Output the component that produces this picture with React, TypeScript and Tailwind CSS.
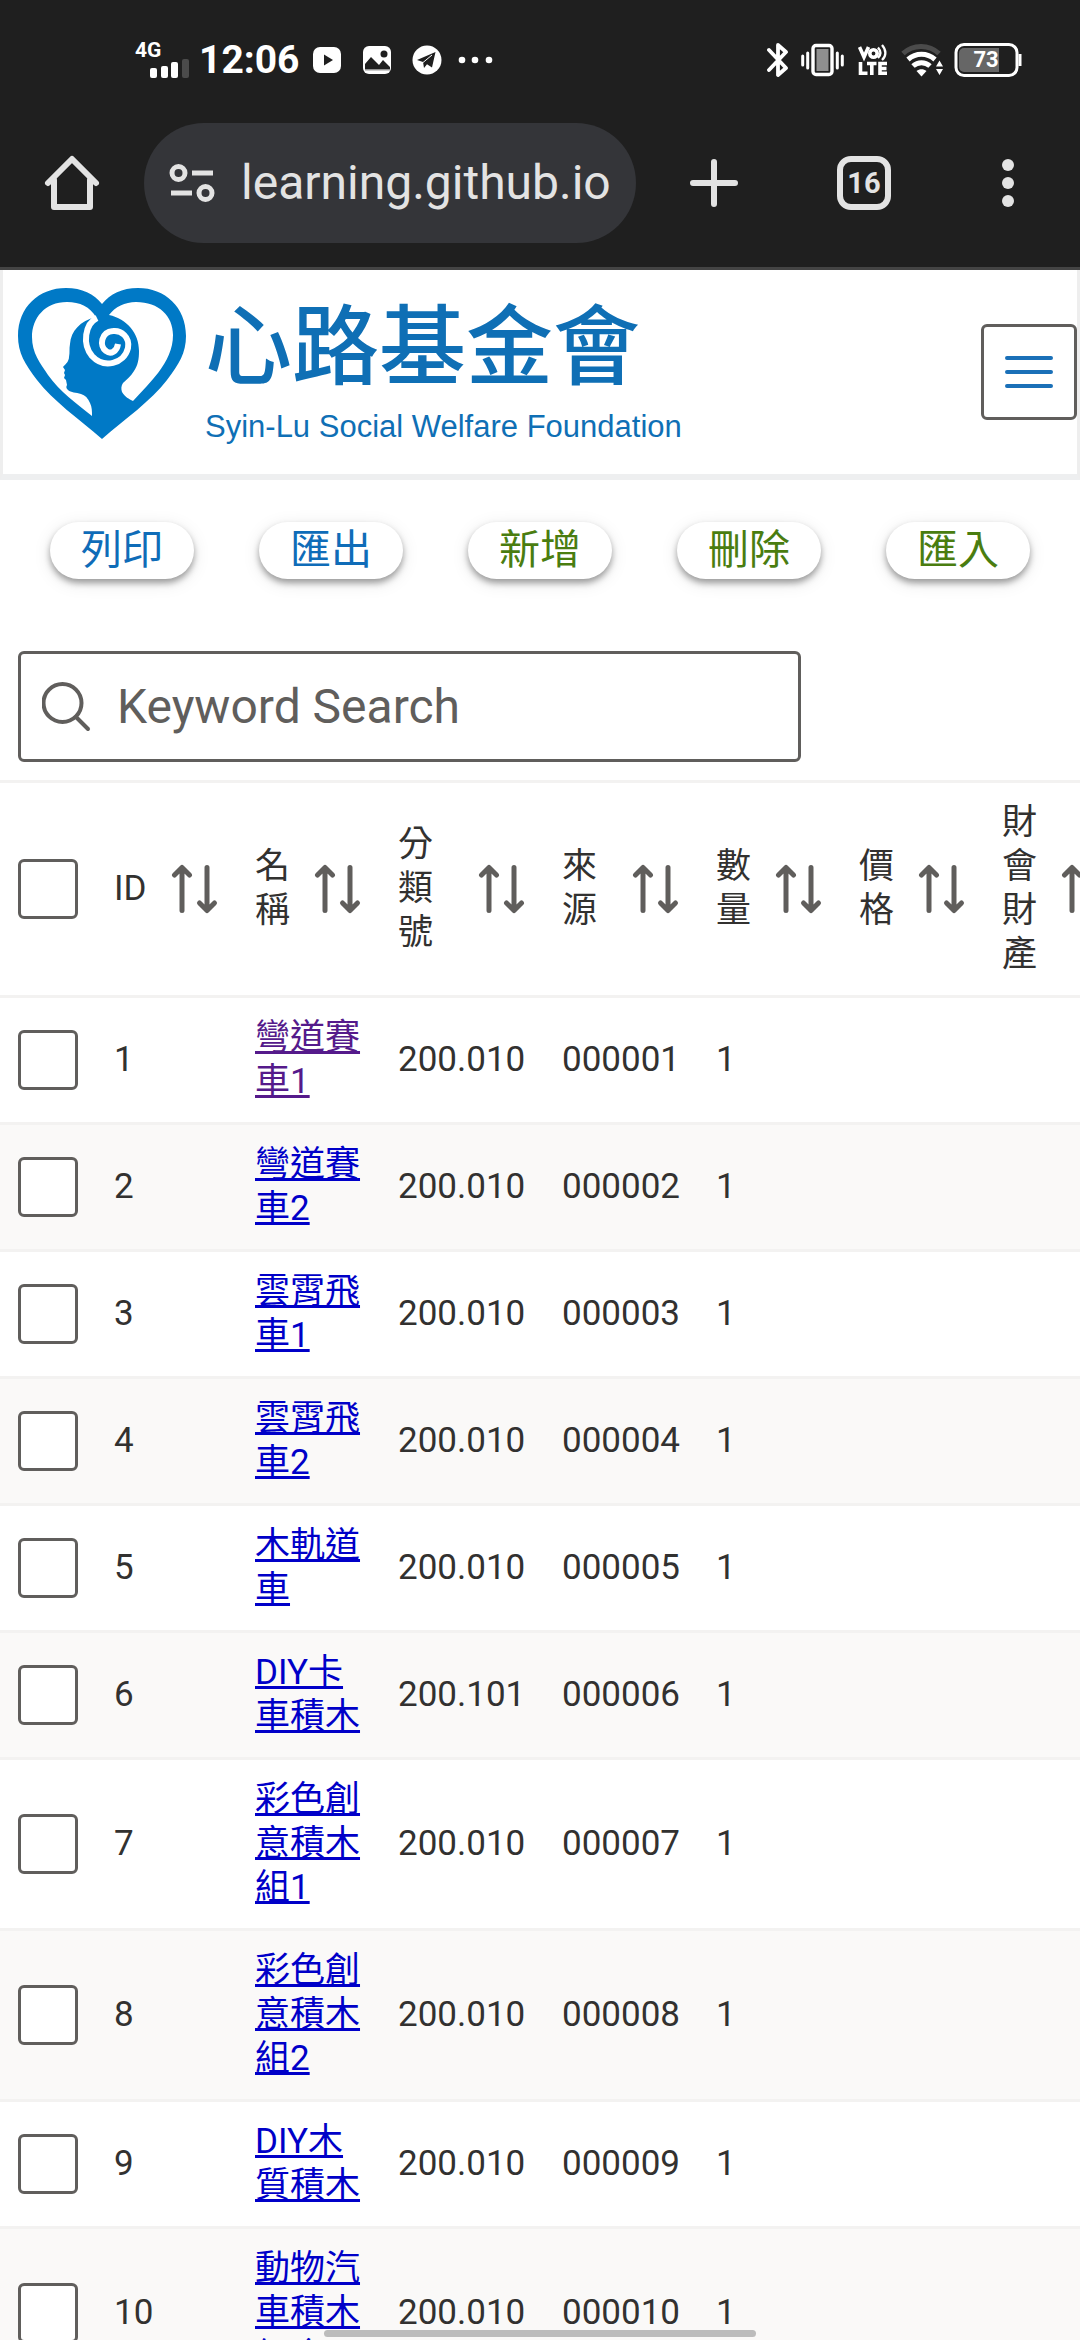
import React from "react";

const cjk = "font-[Roboto,'Noto_Sans_CJK_TC',sans-serif]";

type Item = { id: number; name: string; code: string; source: string; visited?: boolean };

const items: Item[] = [
  { id: 1, name: "彎道賽車1", code: "200.010", source: "000001", visited: true },
  { id: 2, name: "彎道賽車2", code: "200.010", source: "000002" },
  { id: 3, name: "雲霄飛車1", code: "200.010", source: "000003" },
  { id: 4, name: "雲霄飛車2", code: "200.010", source: "000004" },
  { id: 5, name: "木軌道車", code: "200.010", source: "000005" },
  { id: 6, name: "DIY卡車積木", code: "200.101", source: "000006" },
  { id: 7, name: "彩色創意積木組1", code: "200.010", source: "000007" },
  { id: 8, name: "彩色創意積木組2", code: "200.010", source: "000008" },
  { id: 9, name: "DIY木質積木", code: "200.010", source: "000009" },
  { id: 10, name: "動物汽車積木組合", code: "200.010", source: "000010" },
];

const headers = ["ID", "名稱", "分類號", "來源", "數量", "價格", "財會財產"];

const actions = [
  { label: "列印", color: "text-[#0f6cb8]" },
  { label: "匯出", color: "text-[#0f6cb8]" },
  { label: "新增", color: "text-[#4a7d10]" },
  { label: "刪除", color: "text-[#4a7d10]" },
  { label: "匯入", color: "text-[#4a7d10]" },
];

function StatusBar() {
  return (
    <div className="flex h-[120px] items-center justify-between pr-[58px] pl-[135px] text-white">
      <div className="flex items-center">
        <div className="flex w-[56px] flex-col">
          <span className="text-[21px] leading-[18px] font-bold">4G</span>
          <svg width="56" height="20" viewBox="0 0 56 20" aria-hidden="true">
            <g fill="#fff">
              <rect x="15" y="9" width="7" height="10" rx="2" />
              <rect x="26" y="7" width="7" height="12" rx="2" />
              <rect x="36" y="3" width="7" height="16" rx="2" />
            </g>
            <rect x="47" y="0" width="7" height="19" rx="2" fill="#4b4b4b" />
          </svg>
        </div>
        <span className="ml-[8px] w-[98px] text-[39px] leading-[44px] font-bold">12:06</span>
        <svg className="ml-[15px]" width="30" height="30" viewBox="0 0 30 30" aria-hidden="true">
          <rect x="1" y="2" width="28" height="26" rx="7" fill="#fff" />
          <path d="M12 9.500v11l9-5.500z" fill="#1f1f1f" />
        </svg>
        <svg className="ml-[20px]" width="30" height="30" viewBox="0 0 30 30" aria-hidden="true">
          <rect x="1" y="1" width="28" height="28" rx="6" fill="#fff" />
          <circle cx="22" cy="9" r="3.500" fill="#1f1f1f" />
          <path d="M3 19 9 12l8 8 4-5 7 7v3H3z" fill="#1f1f1f" />
          <path d="M3 25h25" stroke="#bbb" strokeWidth="1.500" />
        </svg>
        <svg className="ml-[20px]" width="30" height="30" viewBox="0 0 30 30" aria-hidden="true">
          <circle cx="15" cy="15" r="14.500" fill="#fff" />
          <path d="M5 15 23.500 7 20 22.500l-5-3.200-3 3.700-1-6z" fill="#1f1f1f" />
          <path d="m11 17.500 9-7.500" stroke="#fff" strokeWidth="1" />
        </svg>
        <svg className="ml-[16px]" width="36" height="8" viewBox="0 0 36 8" aria-hidden="true">
          <g fill="#fff">
            <circle cx="4" cy="4" r="3.300" />
            <circle cx="17" cy="4" r="3.300" />
            <circle cx="31" cy="4" r="3.300" />
          </g>
        </svg>
      </div>
      <div className="flex items-center">
        <svg width="22" height="36" viewBox="0 0 22 36" aria-hidden="true">
          <path d="m2 8 17 18-8 7V3l8 7L2 28" fill="none" stroke="#fff" strokeWidth="3.800" strokeLinecap="round" strokeLinejoin="round" />
        </svg>
        <svg className="ml-[12px]" width="43" height="34" viewBox="0 0 43 34" aria-hidden="true">
          <rect x="12" y="2.500" width="19" height="29" rx="3" fill="none" stroke="#fff" strokeWidth="3.400" />
          <rect x="15.500" y="6" width="12" height="22" fill="#8f8f8f" />
          <path d="M1.700 13v9M6.700 10v15M36.300 10v15M41.300 13v9" stroke="#fff" strokeWidth="3" strokeLinecap="round" />
        </svg>
        <svg className="ml-[14px]" width="30" height="34" viewBox="0 0 30 34" aria-hidden="true">
          <g fill="none" stroke="#fff" strokeWidth="3.600">
            <path d="m1.500 4 4.500 10L10.500 4" />
            <circle cx="15.500" cy="10.500" r="3.700" />
            <path d="M20 4.500c3 3.500 3 7.500 0 10.500M24 2c4.500 5 4.500 11 0 15" strokeWidth="2.300" />
            <path d="M2.500 19v11.200h7M9 20.500h9.500M13.800 20.500V32M29 20.500h-7v9.700h7M22 25.500h6.500" />
          </g>
        </svg>
        <svg className="ml-[13px]" width="43" height="34" viewBox="0 0 43 34" aria-hidden="true">
          <g fill="none" strokeWidth="5">
            <path d="M2 10.500c10-9.500 26-9.500 36 0" stroke="#4b4b4b" />
            <path d="M7 16.500c8-7 19-7 27 0M12 23c5-4.500 12-4.500 17 0" stroke="#fff" />
          </g>
          <path d="M15.500 28c3-2.500 7-2.500 10 0l-5 5.500z" fill="#fff" />
          <path d="m35 23.500 3.500-6 3.500 6zM35 26l3.500 6 3.500-6z" fill="#fff" />
        </svg>
        <svg className="ml-[10px]" width="68" height="34" viewBox="0 0 68 34" aria-hidden="true">
          <rect x="2" y="1.500" width="61" height="31" rx="8" fill="none" stroke="#fff" strokeWidth="3" />
          <path d="M10 5h35v24H10a5 5 0 0 1-5-5V10a5 5 0 0 1 5-5z" fill="#666" />
          <path d="M66 11v12" stroke="#fff" strokeWidth="3" />
          <text x="32" y="24" textAnchor="middle" fill="#fff" fontSize="22" fontWeight="700" fontFamily="Roboto">73</text>
        </svg>
      </div>
    </div>
  );
}

function BrowserBar() {
  return (
    <div className="flex h-[147px] items-center pt-[3px] pb-[24px] pr-[45px] pl-[36px] text-[#e3e3e3]">
      <button aria-label="Home" className="flex h-[72px] w-[72px] shrink-0 items-center justify-center">
        <svg width="60" height="60" viewBox="0 0 60 60" fill="none" stroke="currentColor" strokeWidth="6" strokeLinecap="round" strokeLinejoin="round" aria-hidden="true">
          <path d="M6 30 30 6l24 24" />
          <path d="M12 27v27h36V27" />
        </svg>
      </button>
      <div className="ml-[36px] flex h-[120px] min-w-0 flex-1 items-center overflow-hidden rounded-full bg-[#343539] pl-[24px]">
        <svg className="shrink-0" width="48" height="48" viewBox="0 0 48 48" fill="none" stroke="currentColor" strokeWidth="5" aria-hidden="true">
          <circle cx="10.500" cy="14" r="6.500" />
          <path d="M24 14h21M3 34h21" />
          <circle cx="37.500" cy="34" r="6.500" />
        </svg>
        <span className="ml-[25px] text-[48px] leading-[60px] whitespace-nowrap">learning.github.io</span>
      </div>
      <button aria-label="New tab" className="ml-[42px] flex h-[72px] w-[72px] shrink-0 items-center justify-center">
        <svg width="54" height="54" viewBox="0 0 54 54" stroke="currentColor" strokeWidth="6" strokeLinecap="round" aria-hidden="true">
          <path d="M27 6v42M6 27h42" />
        </svg>
      </button>
      <button aria-label="Tabs" className="ml-[87px] flex h-[54px] w-[54px] shrink-0 items-center justify-center rounded-[14px] border-[6px] border-current text-[29px] leading-[36px] font-bold">
        16
      </button>
      <button aria-label="More" className="ml-[90px] flex h-[72px] w-[54px] shrink-0 items-center justify-center">
        <svg width="14" height="50" viewBox="0 0 14 50" fill="currentColor" aria-hidden="true">
          <circle cx="7" cy="7" r="6" />
          <circle cx="7" cy="25" r="6" />
          <circle cx="7" cy="43" r="6" />
        </svg>
      </button>
    </div>
  );
}

function Logo() {
  return (
    <svg className="shrink-0" width="170" height="154" viewBox="0 0 170 154" aria-hidden="true">
      <path
        d="M85 152C62 132 36 114 20 93 8 77 1 66 1 49 1 20 22 1 49 1c16 0 28 6 36 16C93 7 105 1 121 1c27 0 48 19 48 48 0 17-7 28-19 44-16 21-42 39-65 59z"
        fill="#0079c6"
      />
      <path
        d="M79 30C73 20 63 15 50 15 28 15 15 31 15 50c0 16 8 26 16 38 12 17 28 28 44 41 0-5 0-9-2-13-2-5-5-8-9-9-5-2-10-1-13-4-2-2-2-3-1-5l-1-5-2-2 1-3-1-2 1-3-2-3c3-3 6-6 6-10 1-5 0-8 1-13 1-13 10-23 26-27z"
        fill="#fff"
      />
      <path
        d="M92 28c6-8 16-13 27-13 23 0 37 14 37 33 0 14-6 26-15 38-7 9-16 18-25 28-4-2-8-4-11-9-1-3-1-6 1-9 4-4 8-7 11-12 4-6 5-12 5-20 0-18-12-32-30-36z"
        fill="#fff"
      />
      <path
        d="M80 31C68 37 65 57 75 69c12 13 32 8 36-8 2-11-7-18-15-17-12 1-14 15-7 20 5 4 11 0 12-7"
        fill="none"
        stroke="#fff"
        strokeWidth="6"
      />
    </svg>
  );
}

function SiteHeader() {
  return (
    <header className="flex h-[210px] items-start border-x-[3px] border-b-[6px] border-x-[#eee] border-b-[#eeeff0] bg-white">
      <div className="flex pt-[17px] pl-[14px] text-[#0f6fb5]">
        <Logo />
        <div className="ml-[18px] flex flex-col gap-[16px]">
          <h1 className="font-['Noto_Sans_CJK_TC',sans-serif] text-[87px] leading-[106px] font-medium whitespace-nowrap">心路基金會</h1>
          <p className="font-['Liberation_Sans',sans-serif] text-[31px] leading-[36px] whitespace-nowrap">Syin-Lu Social Welfare Foundation</p>
        </div>
      </div>
      <button aria-label="Menu" className="mt-[54px] ml-auto flex h-[96px] w-[96px] shrink-0 items-center justify-center rounded-[6px] border-[3px] border-[#605e5c]">
        <svg width="48" height="36" viewBox="0 0 48 36" stroke="#1a70b8" strokeWidth="4" strokeLinecap="round" aria-hidden="true">
          <path d="M2 4h44M2 18h44M2 32h44" />
        </svg>
      </button>
    </header>
  );
}

function Checkbox({ label }: { label: string }) {
  return (
    <input
      type="checkbox"
      aria-label={label}
      className="block h-[60px] w-[60px] appearance-none rounded-[6px] border-[3px] border-[#605e5c] bg-white"
    />
  );
}

function SortIcon() {
  return (
    <svg width="48" height="54" viewBox="0 0 48 54" fill="none" stroke="#605e5c" strokeWidth="5" strokeLinecap="round" strokeLinejoin="round" aria-hidden="true">
      <path d="M11 48.500V6M3.500 13 11 5.500l7.500 7.500" />
      <path d="M36 5.500V48M28.500 41l7.500 7.500 7.500-7.500" />
    </svg>
  );
}

function ItemTable() {
  return (
    <div className="overflow-x-auto">
      <table className="w-[1127px] table-fixed border-collapse text-left text-[35px] leading-[44px] text-[#323130]">
        <colgroup>
          <col className="w-[96px]" />
          <col className="w-[141px]" />
          <col className="w-[143px]" />
          <col className="w-[164px]" />
          <col className="w-[154px]" />
          <col className="w-[143px]" />
          <col className="w-[143px]" />
          <col className="w-[143px]" />
        </colgroup>
        <thead>
          <tr className="border-y-[3px] border-[#f3f2f1]">
            <th className="p-[18px]">
              <Checkbox label="Select all" />
            </th>
            {headers.map((h) => (
              <th key={h} className="p-[18px] font-normal">
                <button className="flex w-full items-center justify-between text-left">
                  <span className="w-[35px]">{h}</span>
                  <SortIcon />
                </button>
              </th>
            ))}
          </tr>
        </thead>
        <tbody>
          {items.map((it) => (
            <tr key={it.id} className="border-b-[3px] border-[#f3f2f1] even:bg-[#faf9f8]">
              <td className="px-[18px]">
                <Checkbox label={`Select ${it.id}`} />
              </td>
              <td className="px-[18px]">{it.id}</td>
              <td className="p-[18px]">
                <a href="#" className={it.visited ? "text-[#551a8b] underline" : "text-[#0000c8] underline"}>
                  {it.name}
                </a>
              </td>
              <td className="px-[18px]">{it.code}</td>
              <td className="px-[18px]">{it.source}</td>
              <td className="px-[18px]">1</td>
              <td />
              <td />
            </tr>
          ))}
        </tbody>
      </table>
    </div>
  );
}

export default function App() {
  return (
    <div lang="zh-Hant" className={`relative h-screen overflow-hidden bg-white ${cjk}`}>
      <div className="border-b-[3px] border-[#444] bg-[#1f1f1f]">
        <StatusBar />
        <BrowserBar />
      </div>
      <SiteHeader />
      <main>
        <div className="flex justify-between px-[50px] pt-[42px]">
          {actions.map((a) => (
            <button
              key={a.label}
              className={`h-[57px] w-[144px] rounded-full bg-white text-[41px] leading-[57px] shadow-[0_4px_6px_rgba(0,0,0,0.35),0_4px_18px_rgba(0,0,0,0.1)] ${a.color}`}
            >
              {a.label}
            </button>
          ))}
        </div>
        <div className="px-[18px] pt-[72px] pb-[18px]">
          <label className="flex h-[111px] w-3/4 items-center rounded-[6px] border-[3px] border-[#605e5c] pl-[21px]">
            <svg className="shrink-0" width="50" height="50" viewBox="0 0 50 50" fill="none" stroke="#605e5c" strokeWidth="4" strokeLinecap="round" aria-hidden="true">
              <circle cx="20.500" cy="21" r="19" />
              <path d="m34 35 12 12" />
            </svg>
            <input
              type="search"
              aria-label="Keyword Search"
              placeholder="Keyword Search"
              className="ml-[25px] min-w-0 flex-1 bg-transparent text-[48px] leading-[60px] outline-none placeholder:text-[#605e5c]"
            />
          </label>
        </div>
        <ItemTable />
      </main>
      <div className="absolute inset-x-0 bottom-[3px] mx-auto h-[7px] w-[40%] rounded-full bg-[#bcbcbc]" />
    </div>
  );
}
